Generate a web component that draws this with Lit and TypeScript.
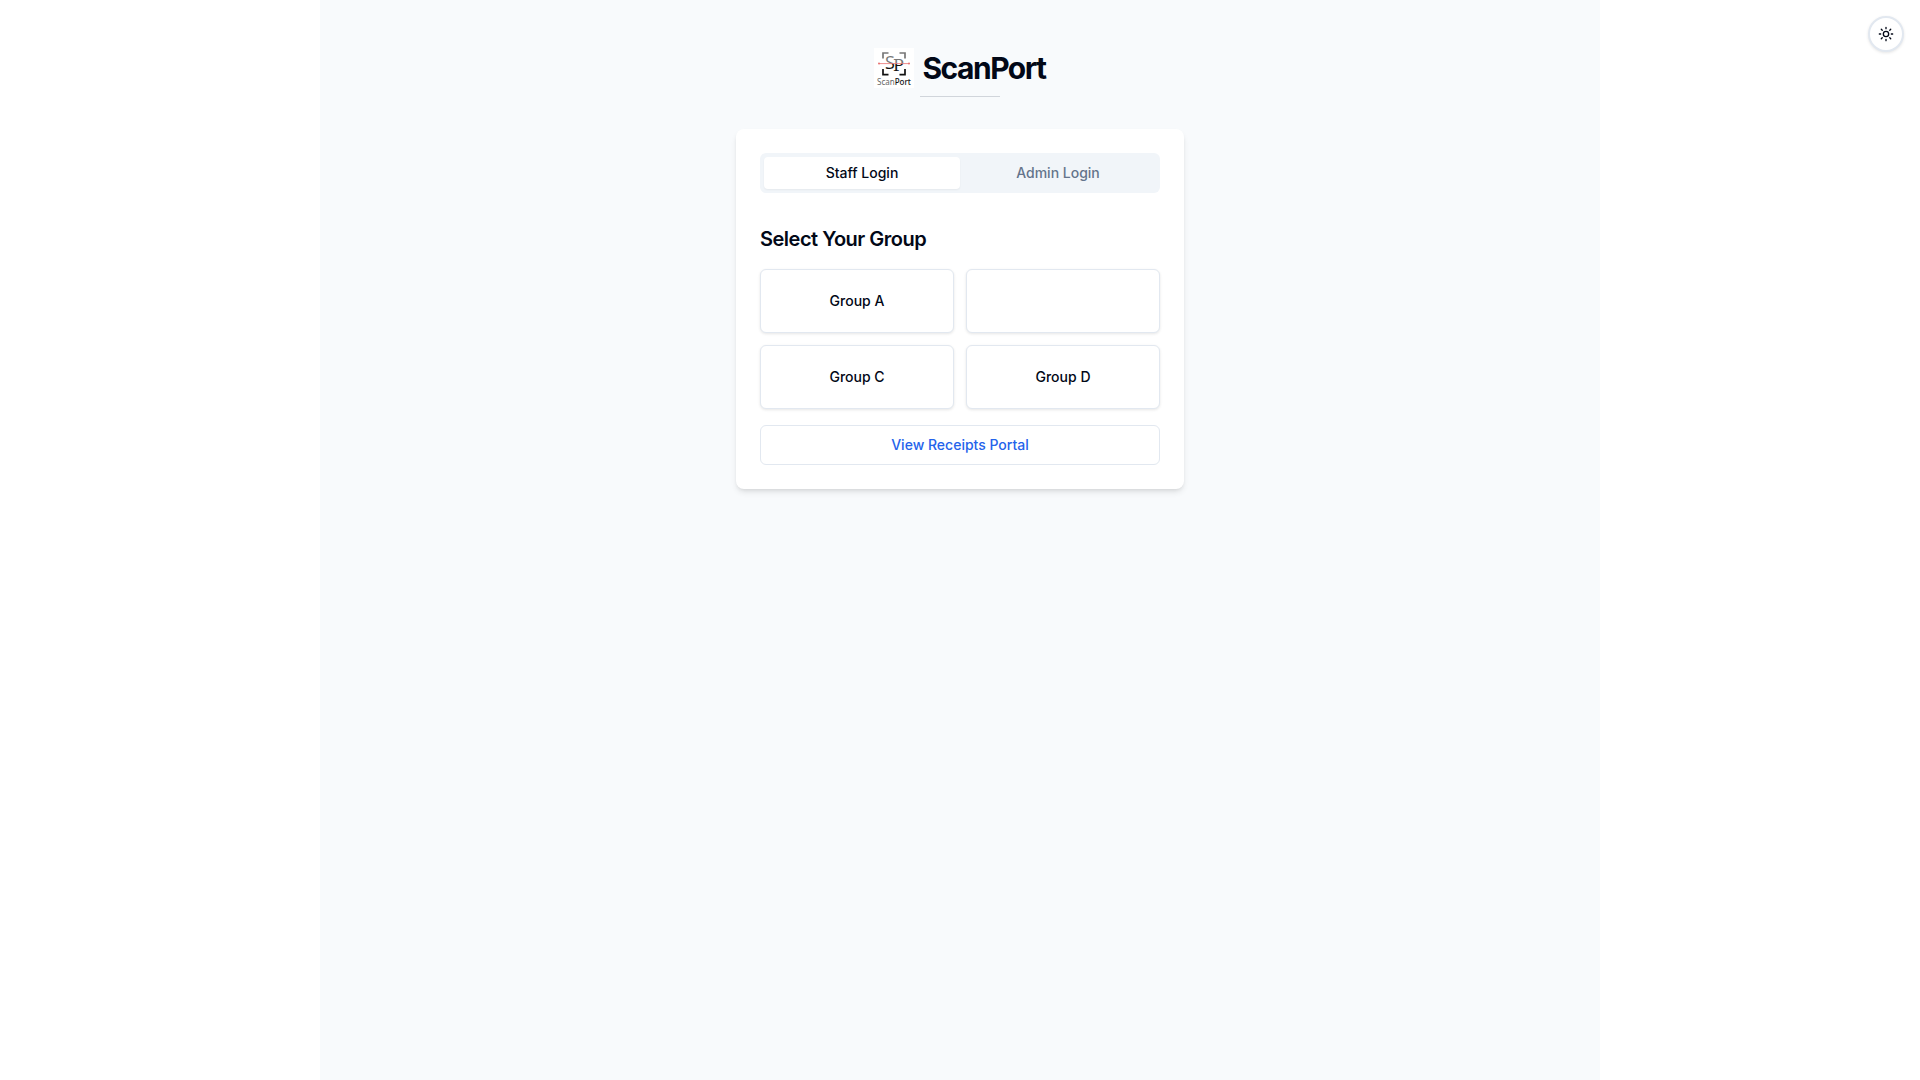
import { LitElement, html, css, svg } from "lit";
import { customElement, state } from "lit/decorators.js";

@customElement("scanport-logo")
class ScanportLogo extends LitElement {
  static styles = css`
    :host {
      display: block;
      width: 40px;
      height: 40px;
      background: #ffffff;
    }
    svg {
      display: block;
    }
    .mark {
      font: 400 18px "Open Sans", "Noto Sans", sans-serif;
    }
    .serif {
      font: 400 16px "DejaVu Serif", serif;
    }
    .word {
      font: 400 8px "Noto Sans", sans-serif;
      fill: #666666;
    }
    .strong {
      font-weight: 500;
      fill: #111111;
    }
  `;

  render() {
    return html`
      <svg width="40" height="40" viewBox="0 0 40 40" role="img" aria-label="ScanPort logo">
        ${svg`
          <defs>
            <linearGradient id="ink" gradientUnits="userSpaceOnUse" x1="0" y1="0" x2="0" y2="40">
              <stop offset="0.4" stop-color="#777777" />
              <stop offset="0.4" stop-color="#111111" />
            </linearGradient>
          </defs>
          <g fill="none" stroke-width="1.7">
            <path stroke="#777777" d="M9 10.5V5h5.5M25.5 5H31v5.5" />
            <path stroke="#111111" d="M9 21v5.7h5.5M25.5 26.7H31V21" />
          </g>
          <g fill="url(#ink)">
            <text class="mark" x="11" y="21">S</text>
            <text class="serif" x="19" y="23">P</text>
          </g>
          <path d="M5 15.6h30" stroke="#e87070" stroke-width="0.8" />
          <circle cx="5" cy="15.6" r="1" fill="#e87070" />
          <circle cx="35" cy="15.6" r="1" fill="#e87070" />
          <text class="word" x="20" y="37" text-anchor="middle">Scan<tspan class="strong">Port</tspan></text>
        `}
      </svg>
    `;
  }
}

@customElement("app-root")
class AppRoot extends LitElement {
  static styles = css`
    :host {
      display: block;
      min-height: 100vh;
      background: #ffffff;
      color: #020817;
      font: 400 14px/20px Inter, "Liberation Sans", sans-serif;
    }
    * {
      box-sizing: border-box;
    }
    button,
    a {
      font: inherit;
      color: inherit;
      cursor: pointer;
    }
    .page {
      display: flex;
      flex-direction: column;
      align-items: center;
      gap: 32px;
      max-width: 1280px;
      min-height: 100vh;
      margin: 0 auto;
      padding: 48px 16px;
      background: #f8fafc;
    }
    .brand {
      display: flex;
      flex-direction: column;
      align-items: center;
      gap: 8px;
    }
    .brand-row {
      display: flex;
      align-items: center;
      gap: 8px;
    }
    .title {
      margin: 0;
      font-size: 30px;
      line-height: 36px;
      font-weight: 700;
      letter-spacing: -0.05em;
    }
    .rule {
      width: 80px;
      height: 1px;
      background: #d1d5db;
    }
    .card {
      width: 100%;
      max-width: 448px;
      padding: 24px;
      border-radius: 8px;
      background: #ffffff;
      box-shadow: 0 4px 6px -1px rgb(0 0 0 / 0.1), 0 2px 4px -2px rgb(0 0 0 / 0.1);
    }
    .tabs {
      display: grid;
      grid-template-columns: 1fr 1fr;
      padding: 4px;
      border-radius: 6px;
      background: #f1f5f9;
      color: #64748b;
    }
    .tab {
      padding: 6px 12px;
      border: 0;
      border-radius: 4px;
      background: transparent;
      font-weight: 500;
    }
    .tab.active {
      background: #ffffff;
      color: #020817;
      box-shadow: 0 1px 2px 0 rgb(0 0 0 / 0.05);
    }
    .heading {
      margin: 32px 0 16px;
      font-size: 20px;
      line-height: 28px;
      font-weight: 600;
      letter-spacing: -0.025em;
    }
    .groups {
      display: grid;
      grid-template-columns: 1fr 1fr;
      gap: 12px;
      margin-bottom: 16px;
    }
    .group,
    .portal {
      border: 1px solid #e2e8f0;
      border-radius: 6px;
      background: #ffffff;
      font-weight: 500;
    }
    .group {
      height: 64px;
      box-shadow: 0 1px 3px 0 rgb(0 0 0 / 0.1);
    }
    .portal {
      display: block;
      padding: 9px 16px;
      color: #2563eb;
      text-align: center;
      text-decoration: none;
    }
    .theme {
      position: absolute;
      top: 16px;
      right: 16px;
      display: grid;
      place-items: center;
      width: 36px;
      height: 36px;
      padding: 0;
      border: 2px solid #e2e8f0;
      border-radius: 50%;
      background: #ffffff;
      box-shadow: 0 1px 3px 0 rgb(0 0 0 / 0.1);
    }
  `;

  @state() private tab = "Staff Login";

  private groups = ["Group A", "", "Group C", "Group D"];

  render() {
    return html`
      <main class="page">
        <header class="brand">
          <div class="brand-row">
            <scanport-logo></scanport-logo>
            <h1 class="title">ScanPort</h1>
          </div>
          <div class="rule"></div>
        </header>
        <section class="card">
          <div class="tabs" role="tablist">
            ${["Staff Login", "Admin Login"].map(
              (name) => html`<button
                class="tab ${this.tab === name ? "active" : ""}"
                role="tab"
                aria-selected=${this.tab === name ? "true" : "false"}
                @click=${() => (this.tab = name)}
              >${name}</button>`
            )}
          </div>
          <h2 class="heading">Select Your Group</h2>
          <div class="groups">
            ${this.groups.map((name) => html`<button class="group">${name}</button>`)}
          </div>
          <a class="portal" href="#receipts">View Receipts Portal</a>
        </section>
      </main>
      <button class="theme" aria-label="Toggle theme">
        <svg width="16" height="16" viewBox="0 0 24 24" fill="none" stroke="currentColor" stroke-width="2" stroke-linecap="round" stroke-linejoin="round">
          <circle cx="12" cy="12" r="4" />
          <path d="M12 2v2M12 20v2M4.93 4.93l1.41 1.41M17.66 17.66l1.41 1.41M2 12h2M20 12h2M6.34 17.66l-1.41 1.41M19.07 4.93l-1.41 1.41" />
        </svg>
      </button>
    `;
  }
}
